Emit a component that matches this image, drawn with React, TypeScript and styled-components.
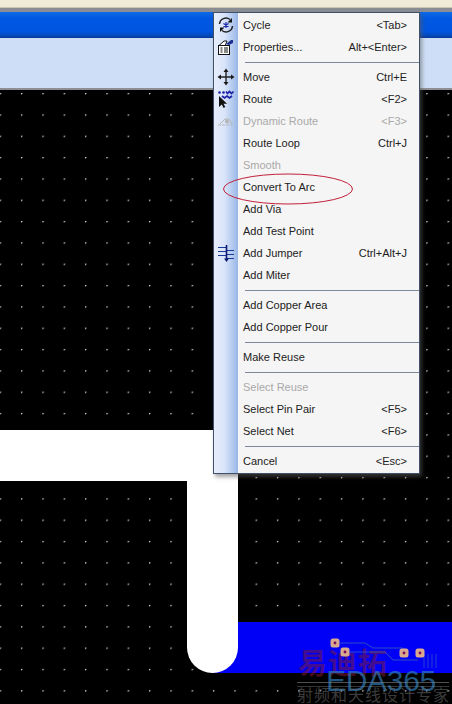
import React from "react";
import styled, { createGlobalStyle } from "styled-components";

const Global = createGlobalStyle`
  html, body { margin: 0; padding: 0; background: #000; }
  body { width: 452px; height: 704px; overflow: hidden; }
`;

const Screen = styled.div`
  position: relative;
  width: 452px;
  height: 704px;
  overflow: hidden;
  display: flex;
  flex-direction: column;
  background: #000;
  font-family: "Liberation Sans", sans-serif;
`;

const TopStrip = styled.div`
  height: 7px;
  flex: none;
  background: #f0ead6;
  border-bottom: 1px solid #c9c5b4;
`;
const GrayStrip = styled.div`
  height: 4px;
  flex: none;
  background: #8a8d94;
`;
const TitleBar = styled.div`
  height: 26px;
  flex: none;
  background: linear-gradient(180deg, #0f6ae6 0%, #0058e2 25%, #0055e0 75%, #0748b8 92%, #053a94 100%);
`;
const Toolbar = styled.div`
  height: 50px;
  flex: none;
  background: #cfdef7;
  border-bottom: 2px solid #8d8f93;
`;

const Canvas = styled.div`
  position: relative;
  flex: 1;
  background-color: #000;
  background-image: radial-gradient(circle at 0.75px 0.75px, #c4c4c4 0.55px, transparent 1px);
  background-size: 21.33px 21.33px;
  background-position: 21px 3px;
`;

const Plane = styled.div`
  position: absolute;
  left: 212px;
  right: 0;
  top: 532px;
  height: 51px;
  background: #0000f6;
`;
const TraceH = styled.div`
  position: absolute;
  left: 0;
  top: 340px;
  width: 238px;
  height: 51px;
  background: #fff;
`;
const TraceV = styled.div`
  position: absolute;
  left: 187px;
  top: 340px;
  width: 51px;
  height: 243px;
  background: #fff;
  border-radius: 0 0 25.5px 25.5px;
`;

const BoardArt = styled.svg`
  position: absolute;
  left: 290px;
  top: 540px;
`;

const WatermarkCn = styled.div`
  position: absolute;
  left: 298px;
  top: 554px;
  font-family: "Noto Sans CJK SC", sans-serif;
  font-size: 29px;
  line-height: 34px;
  font-weight: 700;
  letter-spacing: 1px;
  color: rgba(125, 25, 55, 0.55);
  white-space: nowrap;
`;
const WatermarkLogo = styled.div`
  position: absolute;
  left: 326px;
  top: 576px;
  font-family: "Liberation Sans", sans-serif;
  font-size: 30px;
  line-height: 30px;
  letter-spacing: -0.3px;
  color: rgba(45, 120, 180, 0.72);
  white-space: nowrap;
`;
const WatermarkRule = styled.div`
  position: absolute;
  left: 297px;
  top: 592px;
  width: 152px;
  height: 3px;
  border-top: 1px solid rgba(130, 130, 130, 0.6);
  border-bottom: 1px solid rgba(130, 130, 130, 0.4);
`;
const WatermarkSub = styled.div`
  position: absolute;
  left: 297px;
  top: 596px;
  font-family: "Noto Sans CJK SC", sans-serif;
  font-size: 16px;
  line-height: 16px;
  letter-spacing: 1px;
  color: rgba(110, 110, 110, 0.55);
  white-space: nowrap;
`;

const Menu = styled.div`
  position: absolute;
  left: 213px;
  top: 12px;
  width: 207px;
  height: 462px;
  box-sizing: border-box;
  border: 1px solid #3f5068;
  box-shadow: 2px 3px 4px rgba(90, 90, 90, 0.55);
  background: linear-gradient(90deg, #e6eefc 0%, #d8e4f9 45%, #98b6e6 100%) 0 0 / 24px 100% no-repeat, #f5f5f5;
  padding-top: 1px;
  display: flex;
  flex-direction: column;
  font-size: 11px;
  color: #222;
`;

const Row = styled.div<{ $disabled?: boolean }>`
  height: 22px;
  flex: none;
  display: flex;
  align-items: center;
  color: ${(p) => (p.$disabled ? "#a9a9a9" : "#222")};
`;
const IconCell = styled.div`
  width: 24px;
  height: 22px;
  flex: none;
  display: flex;
  align-items: center;
  justify-content: center;
`;
const Label = styled.span`
  margin-left: 5px;
  flex: 1;
`;
const Shortcut = styled.span`
  margin-right: 12px;
`;
const Sep = styled.div`
  height: 8px;
  flex: none;
  display: flex;
  align-items: center;
  padding-left: 31px;
  &::after {
    content: "";
    flex: 1;
    height: 1px;
    background: #7c8a9c;
  }
`;

const Ellipse = styled.svg`
  position: absolute;
  left: 222px;
  top: 172px;
`;

const CycleIcon = () => (
  <svg width="18" height="18" viewBox="0 0 18 18" fill="none">
    <path d="M2.5 8a6.5 6.5 0 0 1 10.5-4.5" stroke="#222" strokeWidth="1.5" />
    <path d="M15.5 10a6.5 6.5 0 0 1-10.5 4.5" stroke="#222" strokeWidth="1.5" />
    <path d="M15 2v4.5h-4.5z" fill="#111" />
    <path d="M3 16v-4.5h4.5z" fill="#111" />
    <path d="M9 6v6M6.4 7.5l5.2 3M11.6 7.5l-5.2 3" stroke="#1a2aa8" strokeWidth="1.2" />
  </svg>
);
const PropsIcon = () => (
  <svg width="18" height="18" viewBox="0 0 18 18" fill="none">
    <path d="M1.5 8 7 3h3l-2 5z" fill="#fff" stroke="#111" />
    <rect x="1.5" y="7.5" width="11" height="9" fill="#fff" stroke="#111" />
    <path d="M3.5 10h2M3.5 12h2M3.5 14h2M7 10h4M7 12h4M7 14h4" stroke="#111" />
    <path d="M9 6l5-4 2 0 0 3-4 2" fill="#1c2f8f" />
  </svg>
);
const MoveIcon = () => (
  <svg width="18" height="18" viewBox="0 0 18 18" fill="none">
    <path d="M9 3v12M3 9h12" stroke="#222" strokeWidth="1.4" />
    <path d="M9 0.5 11.5 4h-5zM9 17.5 6.5 14h5zM0.5 9 4 6.5v5zM17.5 9 14 11.5v-5z" fill="#1a1a1a" />
  </svg>
);
const RouteIcon = () => (
  <svg width="18" height="18" viewBox="0 0 18 18" fill="none">
    <circle cx="2.5" cy="2.5" r="1.3" fill="#1b1fa6" />
    <circle cx="6.5" cy="2.5" r="1.3" fill="#1b1fa6" />
    <path d="M9 1.5l1.5 2 2-2 2 2 2-2M5 6l2.5 2 2.5-2 2.5 2 2.5-2" stroke="#1b1fa6" strokeWidth="1.7" />
    <path d="M2 6v11l2.8-2.6 1.8 3.6 1.7-.9-1.8-3.4H10z" fill="#111" />
  </svg>
);
const DynamicIcon = () => (
  <svg width="18" height="14" viewBox="0 0 18 14" fill="none">
    <path d="M1 11h16" stroke="#b5b5b5" strokeDasharray="3 1" />
    <path d="M3 10l5-5h4l3 5" stroke="#b5b5b5" />
    <circle cx="10" cy="7.5" r="2" fill="#b5b5b5" />
  </svg>
);
const JumperIcon = () => (
  <svg width="18" height="20" viewBox="0 0 18 20" fill="none">
    <path d="M1 4.5h8M1 8.5h8M1 12.5h8M10 7.5h7M10 11.5h7M10 15.5h7" stroke="#1a3a9a" />
    <path d="M9.5 2v14" stroke="#0d1a70" strokeWidth="1.6" />
    <path d="M7 15.5l2.5 3.5 2.5-3.5z" fill="#0d1a70" />
  </svg>
);

type Item =
  | { sep: true }
  | { sep?: false; label: string; key?: string; disabled?: boolean; icon?: React.ReactNode };

const items: Item[] = [
  { label: "Cycle", key: "<Tab>", icon: <CycleIcon /> },
  { label: "Properties...", key: "Alt+<Enter>", icon: <PropsIcon /> },
  { sep: true },
  { label: "Move", key: "Ctrl+E", icon: <MoveIcon /> },
  { label: "Route", key: "<F2>", icon: <RouteIcon /> },
  { label: "Dynamic Route", key: "<F3>", disabled: true, icon: <DynamicIcon /> },
  { label: "Route Loop", key: "Ctrl+J" },
  { label: "Smooth", disabled: true },
  { label: "Convert To Arc" },
  { label: "Add Via" },
  { label: "Add Test Point" },
  { label: "Add Jumper", key: "Ctrl+Alt+J", icon: <JumperIcon /> },
  { label: "Add Miter" },
  { sep: true },
  { label: "Add Copper Area" },
  { label: "Add Copper Pour" },
  { sep: true },
  { label: "Make Reuse" },
  { sep: true },
  { label: "Select Reuse", disabled: true },
  { label: "Select Pin Pair", key: "<F5>" },
  { label: "Select Net", key: "<F6>" },
  { sep: true },
  { label: "Cancel", key: "<Esc>" },
];

const pads: [number, number][] = [[45, 13], [55, 22], [114, 23], [130, 23]];

export default function App() {
  return (
    <Screen>
      <Global />
      <TopStrip />
      <GrayStrip />
      <TitleBar />
      <Toolbar />
      <Canvas>
        <Plane />
        <TraceH />
        <TraceV />
        <WatermarkCn>易迪拓</WatermarkCn>
        <BoardArt width="162" height="74" viewBox="0 0 162 74" fill="none">
          <path d="M50 13h25l8 5h30M60 22h35l8 8h25" stroke="#3b6fb0" strokeOpacity="0.7" />
          <path d="M134 24v14M138 24v14M142 24v14M146 24v14" stroke="#3b6fb0" strokeOpacity="0.6" />
          {pads.map(([x, y]) => (
            <g key={x}>
              <rect x={x - 4.5} y={y - 4.5} width="9" height="9" rx="2.5" fill="#d9a98f" />
              <circle cx={x} cy={y} r="1.4" fill="#7a0a5a" />
            </g>
          ))}
        </BoardArt>
        <WatermarkLogo>EDA365</WatermarkLogo>
        <WatermarkRule />
        <WatermarkSub>射频和天线设计专家</WatermarkSub>
      </Canvas>
      <Menu>
        {items.map((it, i) =>
          it.sep ? (
            <Sep key={i} />
          ) : (
            <Row key={i} $disabled={it.disabled}>
              <IconCell>{it.icon}</IconCell>
              <Label>{it.label}</Label>
              {it.key && <Shortcut>{it.key}</Shortcut>}
            </Row>
          )
        )}
      </Menu>
      <Ellipse width="132" height="34" viewBox="0 0 132 34" fill="none">
        <ellipse cx="66" cy="17" rx="64.5" ry="15" stroke="#c2203a" strokeWidth="1" />
      </Ellipse>
    </Screen>
  );
}
